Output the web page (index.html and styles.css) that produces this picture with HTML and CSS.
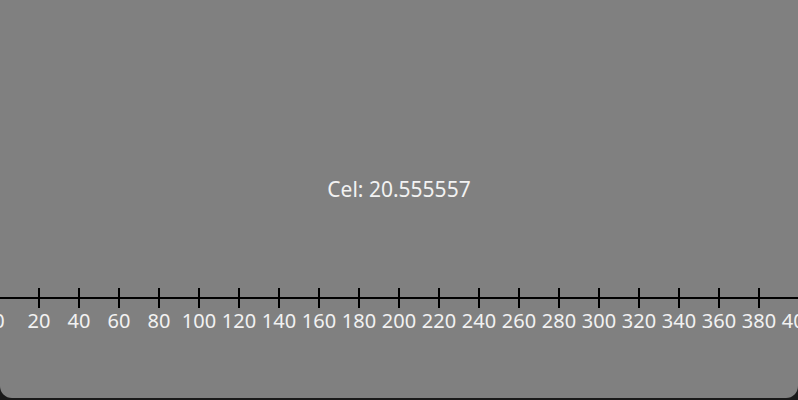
FILE: index.html
```html
<!DOCTYPE html>
<html lang="en">
<head>
  <meta charset="UTF-8" />
  <meta name="viewport" content="width=device-width, initial-scale=1.0"/>
  <title>Thermometer</title>
  <link rel="stylesheet" href="styles.css">
</head>
<body>

<div class="panel">
  <div class="readout">Cel: 20.555557</div>
  <svg class="axis" width="798" height="60" viewBox="0 0 798 60">
    <rect x="0" y="17" width="798" height="2" fill="#000"/>
    <g id="ticks"></g>
  </svg>
</div>

<script>
  const ticks = document.getElementById('ticks');
  const ns = 'http://www.w3.org/2000/svg';

  for (let v = 0; v <= 400; v += 20) {
    const x = v * 2 - 1;

    const tick = document.createElementNS(ns, 'rect');
    tick.setAttribute('x', x - 1);
    tick.setAttribute('y', 8);
    tick.setAttribute('width', 2);
    tick.setAttribute('height', 20);
    tick.setAttribute('fill', '#000');
    ticks.appendChild(tick);

    const label = document.createElementNS(ns, 'text');
    label.setAttribute('x', x);
    label.setAttribute('y', 48);
    label.setAttribute('class', 'label');
    label.textContent = v;
    ticks.appendChild(label);
  }
</script>

</body>
</html>
```

FILE: styles.css
```css
* {
  box-sizing: border-box;
}

body {
  margin: 0;
  background: #1a1a1a;
  font-family: 'Noto Sans', 'Open Sans', sans-serif;
  height: 400px;
  overflow: hidden;
}

.panel {
  width: 798px;
  height: 398px;
  background: #808080;
  border-radius: 0 0 12px 12px;
  display: flex;
  flex-direction: column;
}

.readout {
  padding-top: 175px;
  text-align: center;
  font-size: 21px;
  line-height: 28px;
  color: #f2f2f2;
}

.axis {
  display: block;
  margin-top: 77px;
}

.label {
  font-family: 'Noto Sans', 'Open Sans', sans-serif;
  font-size: 20px;
  fill: #f2f2f2;
  text-anchor: middle;
}
```
